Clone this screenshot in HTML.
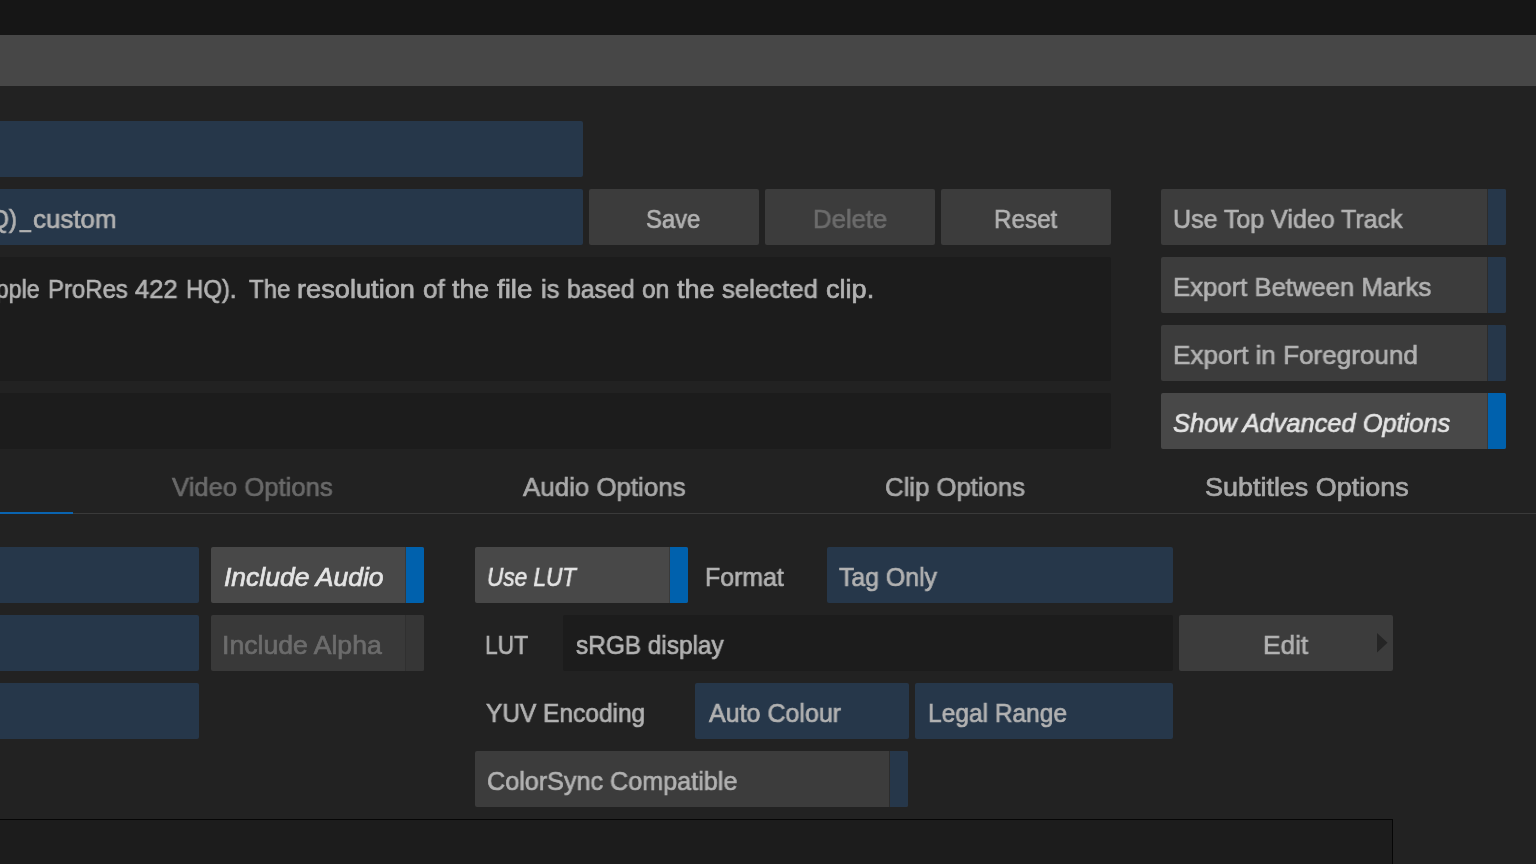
<!DOCTYPE html>
<html lang="en"><head><meta charset="utf-8"><title>Export</title>
<style>
html,body{margin:0;padding:0}
body{width:1536px;height:864px;overflow:hidden;background:#222222;position:relative;font:26.5px/32px 'Liberation Sans', sans-serif;color:#b2b2b2}
#top{position:absolute;left:0;top:0;width:1536px;height:35px;background:#161616}
#bar{position:absolute;left:0;top:35px;width:1536px;height:51px;background:#474747}
.bx{position:absolute;border-radius:2px}
.blue{background:#26374a} .btn{background:#3c3c3c} .dark{background:#1c1c1c}
.tg{position:absolute;height:56px;border-radius:2px;overflow:hidden;background:#3c3c3c}
.tg b{position:absolute;right:0;top:0;width:18px;height:56px;border-left:1px solid #2c2c2c;background:#26374a}
.tg.on{background:#484848} .tg.on b{background:#0061ad;border-left-color:#3a3a3a}
.tg.dis{background:#393939} .tg.dis b{background:#363636;border-left-color:#303030}
.t{position:absolute;white-space:pre;transform-origin:0 0;line-height:32px;-webkit-text-stroke:0.7px;will-change:transform}
.i{font-style:italic}
#tabline{position:absolute;left:0;top:513px;width:1536px;height:1px;background:#3a3a3a}
#tabsel{position:absolute;left:0;top:512px;width:73px;height:2px;background:#0a64b0}
#bot{position:absolute;left:-2px;top:819px;width:1393px;height:60px;background:#1c1c1c;border:1px solid #060606}
#arrow{position:absolute;left:1377px;top:633px;width:11px;height:20px}
</style></head>
<body>
<div id="top"></div><div id="bar"></div>
<div class="bx blue" style="left:-4px;top:121px;width:587px;height:56px"></div>
<div class="bx blue" style="left:-4px;top:189px;width:587px;height:56px"></div>
<div class="bx btn" style="left:589px;top:189px;width:170px;height:56px"></div>
<div class="bx btn" style="left:765px;top:189px;width:170px;height:56px"></div>
<div class="bx btn" style="left:941px;top:189px;width:170px;height:56px"></div>
<div class="bx dark" style="left:-4px;top:257px;width:1115px;height:124px"></div>
<div class="bx dark" style="left:-4px;top:393px;width:1115px;height:56px"></div>
<div class="bx blue" style="left:-4px;top:547px;width:203px;height:56px"></div>
<div class="bx blue" style="left:-4px;top:615px;width:203px;height:56px"></div>
<div class="bx blue" style="left:-4px;top:683px;width:203px;height:56px"></div>
<div class="bx blue" style="left:827px;top:547px;width:346px;height:56px"></div>
<div class="bx dark" style="left:563px;top:615px;width:610px;height:56px"></div>
<div class="bx btn" style="left:1179px;top:615px;width:214px;height:56px"></div>
<div class="bx blue" style="left:695px;top:683px;width:214px;height:56px"></div>
<div class="bx blue" style="left:915px;top:683px;width:258px;height:56px"></div>
<div class="tg off" style="left:1161px;top:189px;width:345px"><b></b></div>
<div class="tg off" style="left:1161px;top:257px;width:345px"><b></b></div>
<div class="tg off" style="left:1161px;top:325px;width:345px"><b></b></div>
<div class="tg on" style="left:1161px;top:393px;width:345px"><b></b></div>
<div class="tg on" style="left:211px;top:547px;width:213px"><b></b></div>
<div class="tg dis" style="left:211px;top:615px;width:213px"><b></b></div>
<div class="tg on" style="left:475px;top:547px;width:213px"><b></b></div>
<div class="tg off" style="left:475px;top:751px;width:433px"><b></b></div>
<div id="tabline"></div><div id="tabsel"></div>
<div id="bot"></div>
<svg id="arrow" viewBox="0 0 11 20"><polygon points="0,0 0,19.5 10.5,9.75" fill="#252525"/></svg>
<div id="desc"><span class="t" style="left:-20.36px;top:273px;transform:scaleX(0.8800)">Apple</span><span class="t" style="left:47.60px;top:273px;transform:scaleX(0.9034)">ProRes</span><span class="t" style="left:134.60px;top:273px;transform:scaleX(0.9636)">422</span><span class="t" style="left:185.90px;top:273px;transform:scaleX(0.9038)">HQ).</span><span class="t" style="left:248.80px;top:273px;transform:scaleX(0.9044)">The</span><span class="t" style="left:297.17px;top:273px;transform:scaleX(1.0265)">resolution</span><span class="t" style="left:423.00px;top:273px;transform:scaleX(0.9783)">of</span><span class="t" style="left:452.30px;top:273px;transform:scaleX(1.0056)">the</span><span class="t" style="left:496.90px;top:273px;transform:scaleX(1.0471)">file</span><span class="t" style="left:540.74px;top:273px;transform:scaleX(0.9556)">is</span><span class="t" style="left:566.76px;top:273px;transform:scaleX(0.9357)">based</span><span class="t" style="left:641.60px;top:273px;transform:scaleX(0.9241)">on</span><span class="t" style="left:676.80px;top:273px;transform:scaleX(1.0222)">the</span><span class="t" style="left:721.80px;top:273px;transform:scaleX(0.9714)">selected</span><span class="t" style="left:825.80px;top:273px;transform:scaleX(1.0217)">clip.</span></div>
<span class="t" style="left:-10.38px;top:203px;color:#b2b2b2;transform:scaleX(0.9200)">Q)</span>
<span class="t" style="left:20.14px;top:201.5px;color:#b2b2b2;transform:scaleX(0.7353)">_</span>
<span class="t" style="left:32.80px;top:203px;color:#b2b2b2;transform:scaleX(0.9786)">custom</span>
<span class="t" style="left:646.00px;top:203px;color:#b2b2b2;transform:scaleX(0.8966)">Save</span>
<span class="t" style="left:812.83px;top:203px;color:#6c6c6c;transform:scaleX(0.9693)">Delete</span>
<span class="t" style="left:993.89px;top:203px;color:#b2b2b2;transform:scaleX(0.9145)">Reset</span>
<span class="t" style="left:1172.96px;top:203px;color:#b2b2b2;transform:scaleX(0.9428)">Use Top Video Track</span>
<span class="t" style="left:1173.43px;top:271px;color:#b2b2b2;transform:scaleX(0.9691)">Export Between Marks</span>
<span class="t" style="left:1173.42px;top:339px;color:#b2b2b2;transform:scaleX(0.9834)">Export in Foreground</span>
<span class="t i" style="left:1173.30px;top:407px;color:#e4e4e4;transform:scaleX(0.9585)">Show Advanced Options</span>
<span class="t" style="left:171.77px;top:471px;color:#6a6a6a;transform:scaleX(0.9683)">Video Options</span>
<span class="t" style="left:523.48px;top:471px;color:#a9a9a9;transform:scaleX(0.9766)">Audio Options</span>
<span class="t" style="left:885.23px;top:471px;color:#a9a9a9;transform:scaleX(0.9706)">Clip Options</span>
<span class="t" style="left:1205.48px;top:471px;color:#a9a9a9;transform:scaleX(1.0166)">Subtitles Options</span>
<span class="t i" style="left:223.90px;top:561px;color:#e4e4e4;transform:scaleX(0.9994)">Include Audio</span>
<span class="t" style="left:221.89px;top:629px;color:#6c6c6c;transform:scaleX(1.0038)">Include Alpha</span>
<span class="t i" style="left:487.25px;top:561px;color:#e4e4e4;transform:scaleX(0.8519)">Use LUT</span>
<span class="t" style="left:705.36px;top:561px;color:#b2b2b2;transform:scaleX(0.9393)">Format</span>
<span class="t" style="left:839.00px;top:561px;color:#b2b2b2;transform:scaleX(0.9371)">Tag Only</span>
<span class="t" style="left:485.24px;top:629px;color:#b2b2b2;transform:scaleX(0.8592)">LUT</span>
<span class="t" style="left:575.50px;top:629px;color:#b2b2b2;transform:scaleX(0.9199)">sRGB display</span>
<span class="t" style="left:1262.81px;top:629px;color:#b2b2b2;transform:scaleX(0.9889)">Edit</span>
<span class="t" style="left:485.50px;top:697px;color:#b2b2b2;transform:scaleX(0.9234)">YUV Encoding</span>
<span class="t" style="left:708.54px;top:697px;color:#b2b2b2;transform:scaleX(0.9433)">Auto Colour</span>
<span class="t" style="left:927.77px;top:697px;color:#b2b2b2;transform:scaleX(0.9255)">Legal Range</span>
<span class="t" style="left:487.15px;top:765px;color:#b2b2b2;transform:scaleX(0.9496)">ColorSync Compatible</span>
</body></html>
